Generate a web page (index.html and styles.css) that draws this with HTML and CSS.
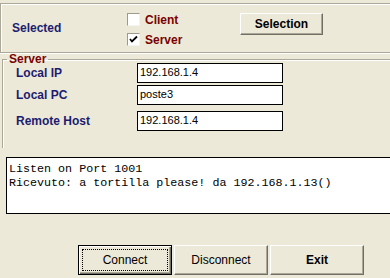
FILE: index.html
```html
<!DOCTYPE html>
<html lang="it">
<head>
  <meta charset="UTF-8">
  <title>Socket</title>
  <link rel="stylesheet" href="styles.css">
</head>
<body>
  <div class="window">
    <!-- selezione client / server -->
    <div class="select-panel">
      <span class="select-label">Selected</span>
      <div class="check-list">
        <label class="check-row">
          <span class="check-box"></span>
          <span class="check-text">Client</span>
        </label>
        <label class="check-row">
          <span class="check-box">
            <svg width="9" height="9" viewBox="0 0 9 9"><path d="M1 4 L3 6.5 L8 1.5" fill="none" stroke="#000" stroke-width="1.8"/></svg>
          </span>
          <span class="check-text">Server</span>
        </label>
      </div>
      <button class="btn btn-select">Selection</button>
    </div>

    <!-- parametri server -->
    <fieldset class="server-group">
      <legend>Server</legend>
      <div class="field-row first">
        <span class="field-label">Local IP</span>
        <div class="field-input">192.168.1.4</div>
      </div>
      <div class="field-row">
        <span class="field-label">Local PC</span>
        <div class="field-input">poste3</div>
      </div>
      <div class="field-row remote">
        <span class="field-label">Remote Host</span>
        <div class="field-input">192.168.1.4</div>
      </div>
    </fieldset>

    <div class="log-box">
      <div>Listen on Port 1001</div>
      <div>Ricevuto: a tortilla please! da 192.168.1.13()</div>
    </div>

    <div class="btn-bar">
      <button class="btn btn-big btn-default"><span class="focus">Connect</span></button>
      <button class="btn btn-big">Disconnect</button>
      <button class="btn btn-big btn-bold">Exit</button>
    </div>
  </div>
</body>
</html>
```

FILE: styles.css
```css
body {
  margin: 0;
  padding: 0;
  background-color: #ece9d8;
  font-family: "Liberation Sans", Arial, sans-serif;
  overflow: hidden;
}
.window {
  width: 390px;
  padding-top: 3px;
}
.select-panel {
  height: 48px;
  border-top: 1px solid #aca899;
  border-bottom: 1px solid #aca899;
  border-left: 1px solid #aca899;
  box-shadow: inset 1px 1px 0 #fff, 0 1px 0 #fff;
  display: flex;
  align-items: flex-start;
}
.select-label {
  width: 115px;
  padding-left: 11px;
  margin-top: 17px;
  font-size: 12px;
  line-height: 14px;
  font-weight: bold;
  color: #1c1c70;
}
.check-list {
  width: 113px;
  margin-top: 9px;
  display: flex;
  flex-direction: column;
  gap: 7px;
}
.check-row {
  display: flex;
  align-items: center;
  height: 13px;
  gap: 5px;
}
.check-box {
  width: 11px;
  height: 11px;
  background: #fff;
  border-top: 1px solid #9d9a8c;
  border-left: 1px solid #9d9a8c;
  border-bottom: 1px solid #f4f3ee;
  border-right: 1px solid #f4f3ee;
  display: flex;
  align-items: center;
  justify-content: center;
}
.check-text {
  font-size: 12px;
  font-weight: bold;
  color: #7a0000;
}
.btn {
  font-family: "Liberation Sans", Arial, sans-serif;
  background-color: #ece9d8;
  color: #000;
  border-top: 1px solid #fff;
  border-left: 1px solid #fff;
  border-right: 1px solid #716f64;
  border-bottom: 1px solid #716f64;
  box-shadow: inset -1px -1px 0 #aca899;
  padding: 0;
  cursor: pointer;
}
.btn-select {
  margin-top: 9px;
  width: 83px;
  height: 22px;
  font-size: 12px;
  font-weight: bold;
}
.server-group {
  width: 387px;
  margin: 1px 0 0 2px;
  padding: 0 0 17px 0;
  border: none;
  border-top: 1px solid #aca899;
  border-left: 1px solid #aca899;
  box-shadow: inset 1px 1px 0 #fff;
}
.server-group legend {
  margin-left: 4px;
  padding: 0 2px;
  font-size: 12px;
  line-height: 10px;
  font-weight: bold;
  color: #7a0000;
}
.field-row {
  display: flex;
  align-items: center;
  padding-left: 13px;
  margin-top: 2px;
}
.field-row.first {
  margin-top: -1px;
}
.field-row.remote {
  margin-top: 6px;
}
.field-label {
  width: 121px;
  font-size: 12px;
  font-weight: bold;
  color: #1c1c70;
}
.field-input {
  width: 142px;
  height: 18px;
  padding-left: 2px;
  background: #fff;
  border: 1px solid #000;
  font-size: 11px;
  line-height: 17px;
  color: #000;
}
.log-box {
  width: 379px;
  height: 45px;
  margin: 9px 0 0 6px;
  padding: 4px 2px 6px 2px;
  background: #fff;
  border: 1px solid #000;
  border-right: none;
  font-family: "Liberation Mono", "Courier New", monospace;
  font-size: 11.7px;
  line-height: 14px;
  color: #000;
}
.btn-bar {
  display: flex;
  gap: 2px;
  padding-left: 78px;
  margin-top: 31px;
}
.btn-big {
  width: 94px;
  height: 30px;
  font-size: 12px;
}
.btn-bold {
  font-weight: bold;
}
.btn-default {
  border: 1px solid #000;
  box-shadow: inset 1px 1px 0 #fff, inset -1px -1px 0 #716f64, inset -2px -2px 0 #aca899;
  display: flex;
  align-items: center;
  justify-content: center;
}
.btn-default .focus {
  display: flex;
  align-items: center;
  justify-content: center;
  width: 84px;
  height: 20px;
  border: 1px dotted #000;
}
```
